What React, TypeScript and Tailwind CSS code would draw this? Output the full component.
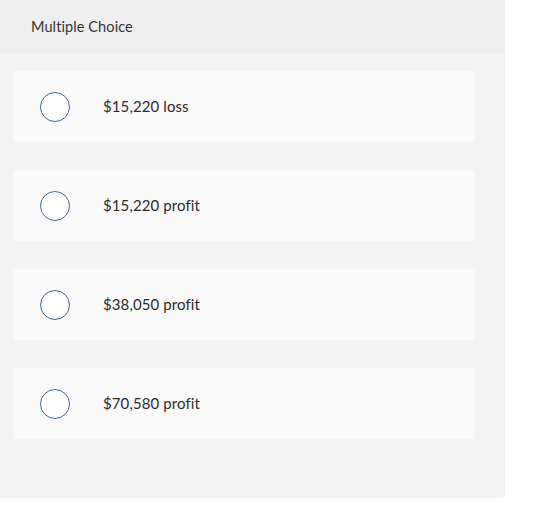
export default function App() {
  const options = ["$15,220 loss", "$15,220 profit", "$38,050 profit", "$70,580 profit"];

  return (
    <div className="min-h-screen bg-white" style={{ fontFamily: "Lato, 'Open Sans', sans-serif", fontVariantLigatures: "none" }}>
      <div className="w-[505px] bg-[#f4f4f4] rounded-br-[3px]">
        {/* Header */}
        <div className="h-[53px] bg-[#efefef] flex items-center pl-[31px]">
          <span className="text-[14.5px] text-[#333] tracking-[0.1px]">Multiple Choice</span>
        </div>

        {/* Options */}
        <div className="pt-[18px] pb-[59px] pl-[13px] pr-[30px] flex flex-col gap-[28px]">
          {options.map((option) => (
            <div key={option} className="h-[71px] bg-[#fafafa] rounded-[3px] flex items-center pl-[27px]">
              <div className="w-[30px] h-[30px] rounded-full border border-[#3d6aa3] bg-white shrink-0"></div>
              <span className="ml-[33px] text-[15px] text-[#2b2b2b] tracking-[0.1px]">{option}</span>
            </div>
          ))}
        </div>
      </div>
    </div>
  );
}
